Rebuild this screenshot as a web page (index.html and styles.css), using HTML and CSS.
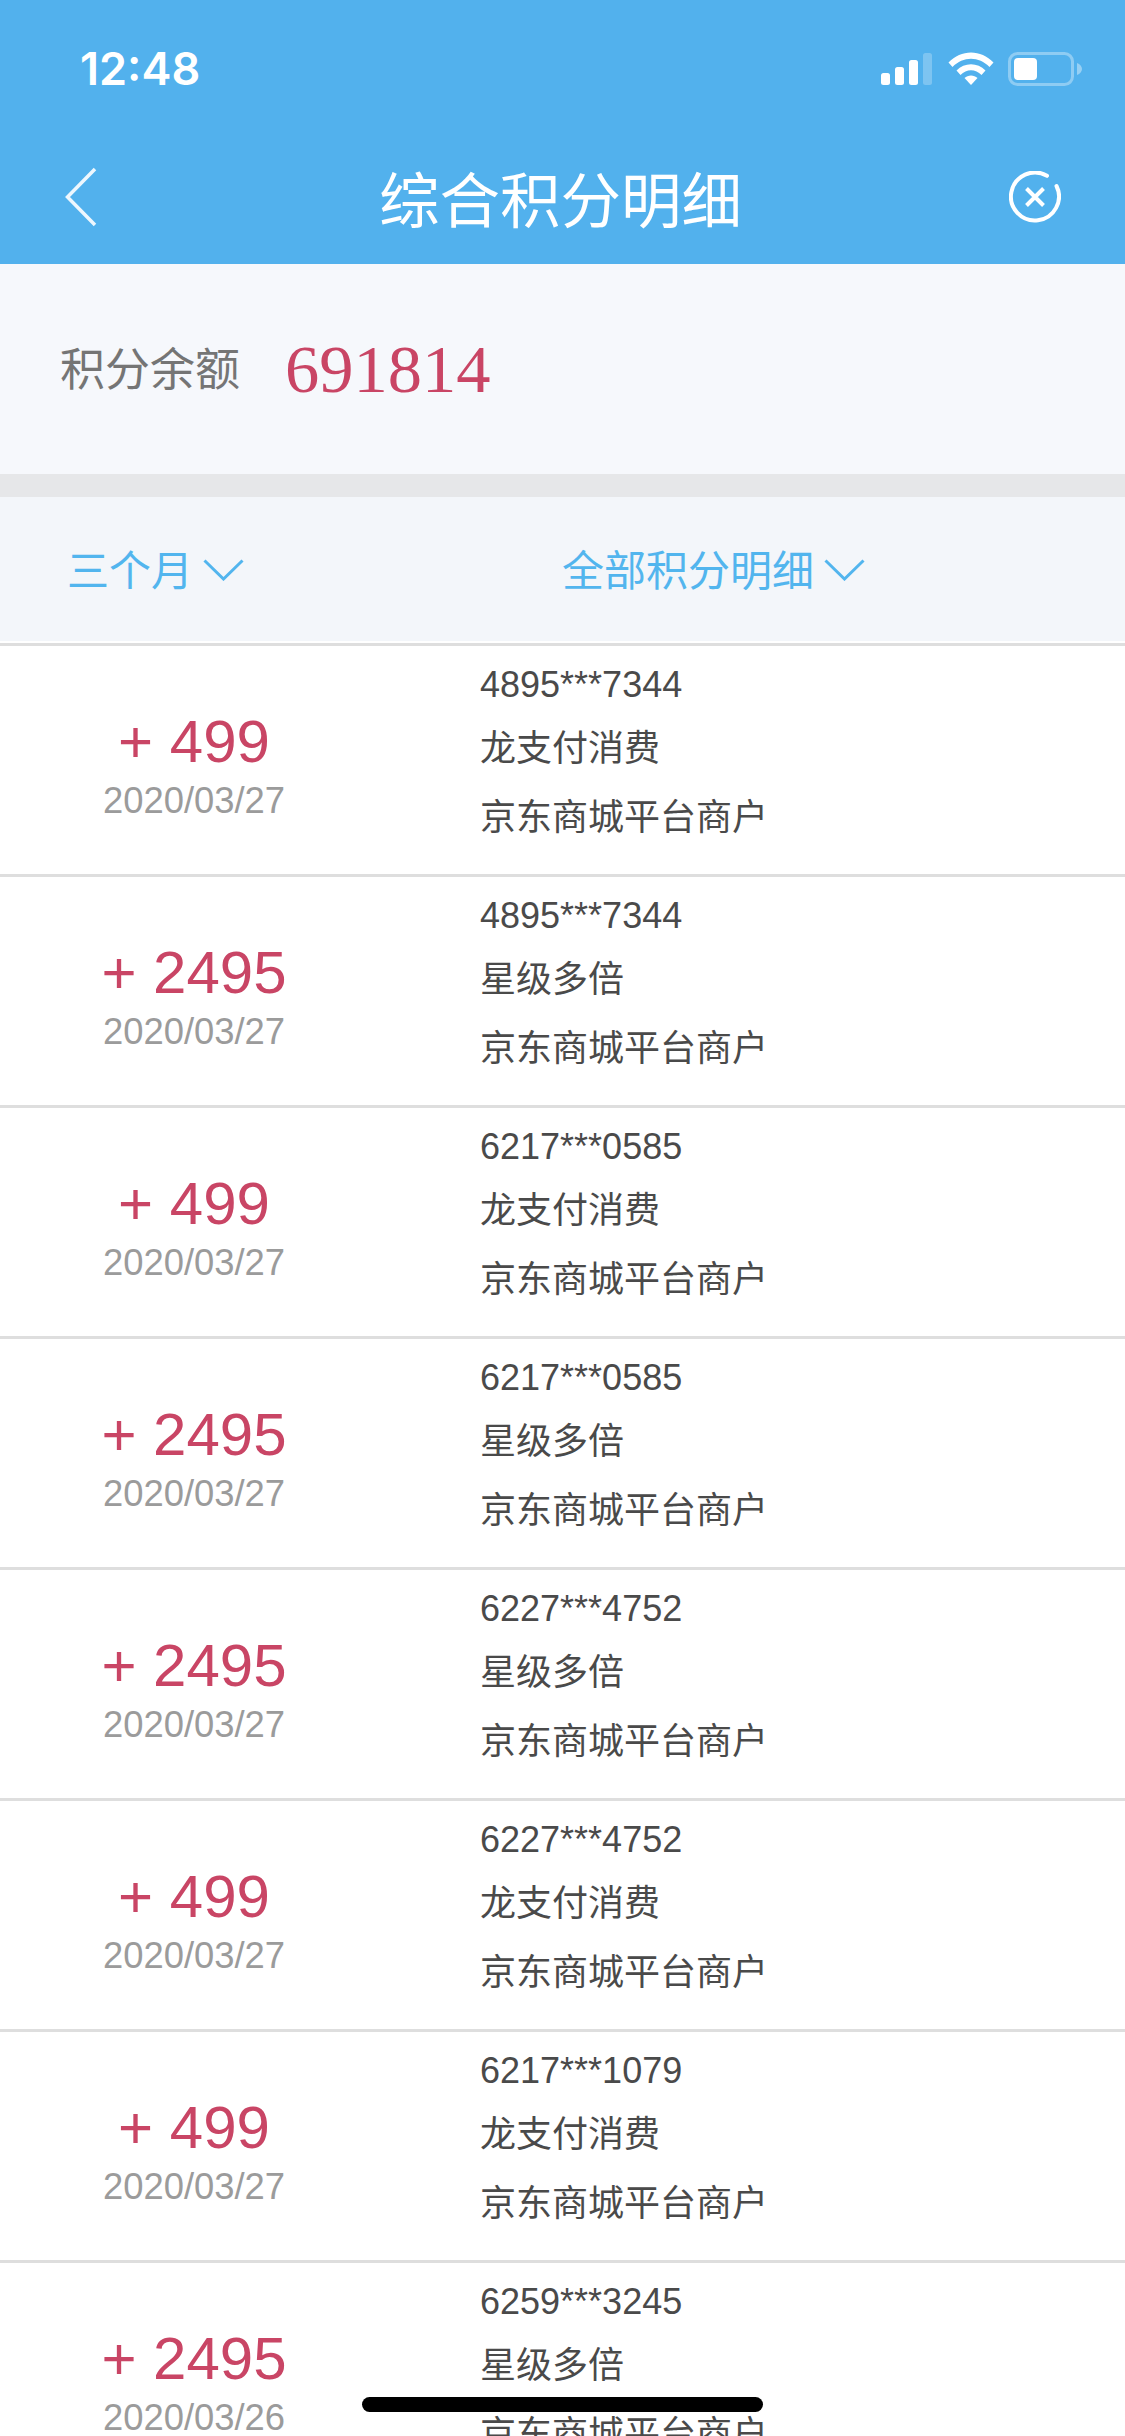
FILE: index.html
```html
<!DOCTYPE html>
<html lang="zh-CN">
<head>
<meta charset="utf-8">
<title>综合积分明细</title>
<link rel="stylesheet" href="styles.css">
</head>
<body>
<div class="page">
  <header class="header">
    <div class="status">
      <span class="time">12:48</span>
      <div class="status-icons">
        <svg class="signal" width="51" height="32" viewBox="0 0 51 32"><rect x="0" y="20" width="9" height="12" rx="2.5" fill="#fff"/><rect x="14" y="14" width="9" height="18" rx="2.5" fill="#fff"/><rect x="28" y="7" width="9" height="25" rx="2.5" fill="#fff"/><rect x="42" y="0" width="9" height="32" rx="2.5" fill="#fff" opacity=".25"/></svg>
        <svg class="wifi" width="46" height="33" viewBox="0 0 46 33"><path d="M0.5 10.5C13 -3 33 -3 45.5 10.5L41.5 15C31 4 15 4 4.5 15Z" fill="#fff"/><path d="M8.5 18.5C16.5 10 29.5 10 37.5 18.5L33.5 23C27.5 16.5 18.5 16.5 12.5 23Z" fill="#fff"/><path d="M16.5 26C20 22.5 26 22.5 29.5 26L23 33Z" fill="#fff"/></svg>
        <svg class="battery" width="74" height="34" viewBox="0 0 74 34"><rect x="1.5" y="1.5" width="63" height="31" rx="8" fill="none" stroke="#fff" stroke-opacity=".35" stroke-width="3"/><rect x="6" y="6" width="23" height="22" rx="4" fill="#fff"/><path d="M69 11C72 12 74 14.500 74 17C74 19.500 72 22 69 23Z" fill="#fff" fill-opacity=".4"/></svg>
      </div>
    </div>
    <nav class="nav">
      <svg class="back" width="32" height="60" viewBox="0 0 32 60"><path d="M30 2L2.500 30L30 58" fill="none" stroke="#fff" stroke-width="3.500" stroke-opacity=".9"/></svg>
      <h1 class="title">综合积分明细</h1>
      <svg class="close" width="52" height="52" viewBox="0 0 52 52"><path d="M38 4.800A24 24 0 1 0 47.500 15" fill="none" stroke="#fff" stroke-width="4" stroke-linecap="round"/><path d="M17.500 17.500L34.500 34.500M34.500 17.500L17.500 34.500" fill="none" stroke="#fff" stroke-width="4"/></svg>
    </nav>
  </header>

  <section class="summary">
    <span class="summary-label">积分余额</span>
    <span class="summary-value">691814</span>
  </section>
  <div class="spacer"></div>

  <section class="filters">
    <div class="filter filter-period"><span>三个月</span><svg width="41" height="22" viewBox="0 0 41 22"><path d="M1.500 1.500L20.500 20L39.500 1.500" fill="none" stroke="#52b5ee" stroke-width="3"/></svg></div>
    <div class="filter"><span>全部积分明细</span><svg width="41" height="22" viewBox="0 0 41 22"><path d="M1.500 1.500L20.500 20L39.500 1.500" fill="none" stroke="#52b5ee" stroke-width="3"/></svg></div>
  </section>

  <main class="list">
    <article class="row"><div class="amount-col"><div class="amount">+ 499</div><div class="date">2020/03/27</div></div><div class="info"><div class="card">4895***7344</div><div class="kind">龙支付消费</div><div class="merchant">京东商城平台商户</div></div></article>
    <article class="row"><div class="amount-col"><div class="amount">+ 2495</div><div class="date">2020/03/27</div></div><div class="info"><div class="card">4895***7344</div><div class="kind">星级多倍</div><div class="merchant">京东商城平台商户</div></div></article>
    <article class="row"><div class="amount-col"><div class="amount">+ 499</div><div class="date">2020/03/27</div></div><div class="info"><div class="card">6217***0585</div><div class="kind">龙支付消费</div><div class="merchant">京东商城平台商户</div></div></article>
    <article class="row"><div class="amount-col"><div class="amount">+ 2495</div><div class="date">2020/03/27</div></div><div class="info"><div class="card">6217***0585</div><div class="kind">星级多倍</div><div class="merchant">京东商城平台商户</div></div></article>
    <article class="row"><div class="amount-col"><div class="amount">+ 2495</div><div class="date">2020/03/27</div></div><div class="info"><div class="card">6227***4752</div><div class="kind">星级多倍</div><div class="merchant">京东商城平台商户</div></div></article>
    <article class="row"><div class="amount-col"><div class="amount">+ 499</div><div class="date">2020/03/27</div></div><div class="info"><div class="card">6227***4752</div><div class="kind">龙支付消费</div><div class="merchant">京东商城平台商户</div></div></article>
    <article class="row"><div class="amount-col"><div class="amount">+ 499</div><div class="date">2020/03/27</div></div><div class="info"><div class="card">6217***1079</div><div class="kind">龙支付消费</div><div class="merchant">京东商城平台商户</div></div></article>
    <article class="row"><div class="amount-col"><div class="amount">+ 2495</div><div class="date">2020/03/26</div></div><div class="info"><div class="card">6259***3245</div><div class="kind">星级多倍</div><div class="merchant">京东商城平台商户</div></div></article>
  </main>
  <div class="home-indicator"></div>
</div>
</body>
</html>
```

FILE: styles.css
```css
* { box-sizing: border-box; }
html, body { margin: 0; padding: 0; background: #fff; }
body { font-family: "Liberation Sans", "Noto Sans CJK SC", sans-serif; }
.page { position: relative; width: 1125px; height: 2436px; overflow: hidden; }

.header { background: #52b1ed; height: 264px; color: #fff; }
.status { height: 130px; display: flex; justify-content: space-between; padding: 52px 43px 0 80px; }
.time { font-family: Inter, "Liberation Sans", sans-serif; font-weight: 600; font-size: 45px; line-height: 34px; }
.status-icons { display: flex; align-items: flex-start; gap: 15px; }
.signal { margin-top: 1px; }
.wifi { margin-left: 1px; margin-right: -1px; }
.nav { height: 134px; display: grid; grid-template-columns: 1fr auto 1fr; align-items: center; padding: 0 64px 0 60px; }
.back { margin-left: 5px; }
.title { margin: 0; font-size: 60.500px; line-height: 70px; font-weight: 400; font-family: "Noto Sans CJK SC", sans-serif; }
.close { justify-self: end; }

.summary { height: 210px; background: #f6f8fc; display: flex; align-items: center; padding-left: 60px; }
.summary-label { font-family: "Noto Sans CJK SC", sans-serif; font-size: 45px; font-weight: 400; color: #757575; width: 225px; line-height: 60px; margin-top: -5px; }
.summary-value { font-family: "Liberation Serif", serif; font-size: 68.500px; color: #c94565; line-height: 80px; }
.spacer { height: 23px; background: #e6e7e9; }

.filters { height: 149px; background: #f3f6fa; display: grid; grid-template-columns: 495px auto; align-items: center; padding: 0 0 5px 67px; border-bottom: 3px solid #dedede; box-shadow: inset 0 -2px 0 #fff; color: #52b5ee; }
.filter { display: flex; align-items: center; gap: 10px; font-family: "Noto Sans CJK SC", sans-serif; font-size: 42px; font-weight: 400; line-height: 50px; }
.filter svg { margin-top: 5px; }

.row { height: 231px; border-bottom: 3px solid #dedede; display: grid; grid-template-columns: 388px 1fr; column-gap: 92px; }
.amount-col { padding-top: 64px; text-align: center; }
.amount { font-size: 60px; line-height: 64px; color: #c94565; }
.date { margin-top: 5px; font-size: 36.400px; line-height: 44px; color: #9b9b9b; }
.info { padding-top: 14px; font-size: 36px; color: #4a4a4a; }
.card { line-height: 50px; }
.kind, .merchant { font-family: "Noto Sans CJK SC", sans-serif; font-weight: 400; line-height: 50px; }
.kind { margin-top: 10px; }
.merchant { margin-top: 19px; }

.home-indicator { position: absolute; left: 362px; top: 2397px; width: 401px; height: 15px; background: #000; border-radius: 8px; }
```
